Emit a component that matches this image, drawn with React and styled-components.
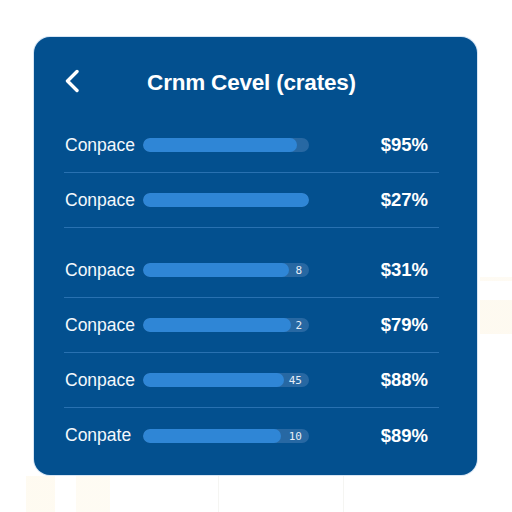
import styled, { createGlobalStyle } from "styled-components";

const GlobalStyle = createGlobalStyle`
  html, body {
    margin: 0;
    padding: 0;
    background: #ffffff;
    font-family: "Liberation Sans", Arial, sans-serif;
  }
`;

const filas = [
  { nombre: "Conpace", relleno: 93, valor: "$95%" },
  { nombre: "Conpace", relleno: 100, valor: "$27%" },
];

const filas2 = [
  { nombre: "Conpace", relleno: 88, marca: "8", valor: "$31%" },
  { nombre: "Conpace", relleno: 89, marca: "2", valor: "$79%" },
  { nombre: "Conpace", relleno: 85, marca: "45", valor: "$88%" },
  { nombre: "Conpate", relleno: 83, marca: "10", valor: "$89%" },
];

const Fila = ({ fila, ultima }) => (
  <Row ultima={ultima}>
    <Label>{fila.nombre}</Label>
    <Track>
      <Fill style={{ width: `${fila.relleno}%` }} />
      {fila.marca && <Marca>{fila.marca}</Marca>}
    </Track>
    <Valor>{fila.valor}</Valor>
  </Row>
);

const App = () => {
  return (
    <Pagina>
      <GlobalStyle />
      <Tarjeta>
        <Cabecera>
          <Volver aria-label="back">
            <svg width="14" height="24" viewBox="0 0 14 24">
              <polyline
                points="12,2.5 2.5,12 12,21.5"
                fill="none"
                stroke="#ffffff"
                strokeWidth="3.4"
                strokeLinecap="round"
                strokeLinejoin="round"
              />
            </svg>
          </Volver>
          <Titulo>Crnm Cevel (crates)</Titulo>
          <span />
        </Cabecera>
        <Grupo>
          {filas.map((f, i) => (
            <Fila key={i} fila={f} />
          ))}
        </Grupo>
        <Grupo separado>
          {filas2.map((f, i) => (
            <Fila key={i} fila={f} ultima={i === filas2.length - 1} />
          ))}
        </Grupo>
      </Tarjeta>
    </Pagina>
  );
};

const Pagina = styled.div`
  width: 512px;
  height: 512px;
  box-sizing: border-box;
  padding: 37px 0 0 34px;
  overflow: hidden;
  background:
    linear-gradient(90deg, transparent 26px, rgba(253, 242, 215, 0.35) 26px, rgba(253, 242, 215, 0.35) 55px, transparent 55px) 0 476px / 100% 36px no-repeat,
    linear-gradient(90deg, transparent 76px, rgba(253, 242, 215, 0.3) 76px, rgba(253, 242, 215, 0.3) 110px, transparent 110px) 0 476px / 100% 36px no-repeat,
    linear-gradient(rgba(253, 245, 228, 0.55), rgba(253, 245, 228, 0.55)) 480px 300px / 32px 34px no-repeat,
    linear-gradient(rgba(253, 245, 228, 0.45), rgba(253, 245, 228, 0.45)) 480px 277px / 32px 4px no-repeat,
    linear-gradient(90deg, transparent 218px, #f5f5f2 218px, #f5f5f2 219px, transparent 219px, transparent 343px, #f5f5f2 343px, #f5f5f2 344px, transparent 344px) 0 476px / 100% 36px no-repeat,
    #ffffff;
`;

const Tarjeta = styled.div`
  width: 443px;
  height: 438px;
  box-sizing: border-box;
  background: #03508f;
  border-radius: 16px;
  padding: 0 38px 0 30px;
  color: #ffffff;
  box-shadow: 0 0 0 1px rgba(90, 150, 210, 0.25);
`;

const Cabecera = styled.div`
  height: 81px;
  display: grid;
  grid-template-columns: 1fr auto 1fr;
  align-items: center;
  padding-top: 10px;
  box-sizing: border-box;
`;

const Volver = styled.div`
  display: flex;
  align-items: center;
  padding-left: 1px;
  margin-top: -3px;
`;

const Titulo = styled.h1`
  margin: 0;
  font-size: 22.5px;
  font-weight: 700;
  letter-spacing: -0.2px;
  color: #ffffff;
`;

const Grupo = styled.div`
  display: flex;
  flex-direction: column;
  margin-top: ${(p) => (p.separado ? "15px" : "0")};
`;

const Row = styled.div`
  height: 55px;
  display: grid;
  grid-template-columns: 79px 166px 1fr;
  align-items: center;
  border-bottom: ${(p) => (p.ultima ? "none" : "1px solid rgba(72, 140, 205, 0.55)")};
  box-sizing: border-box;
`;

const Label = styled.span`
  font-size: 17.5px;
  color: #f4f8fc;
  padding-left: 1px;
`;

const Track = styled.div`
  position: relative;
  height: 14px;
  border-radius: 7px;
  background: rgba(110, 150, 200, 0.35);
  overflow: hidden;
`;

const Fill = styled.div`
  height: 100%;
  border-radius: 7px;
  background: #2f86d6;
`;

const Marca = styled.span`
  position: absolute;
  right: 7px;
  top: 50%;
  transform: translateY(-50%);
  font-size: 11px;
  line-height: 1;
  color: #e6edf5;
  font-family: "DejaVu Sans Mono", monospace;
`;

const Valor = styled.span`
  justify-self: end;
  padding-right: 11px;
  font-size: 18.5px;
  font-weight: 700;
  color: #ffffff;
`;

export default App;
